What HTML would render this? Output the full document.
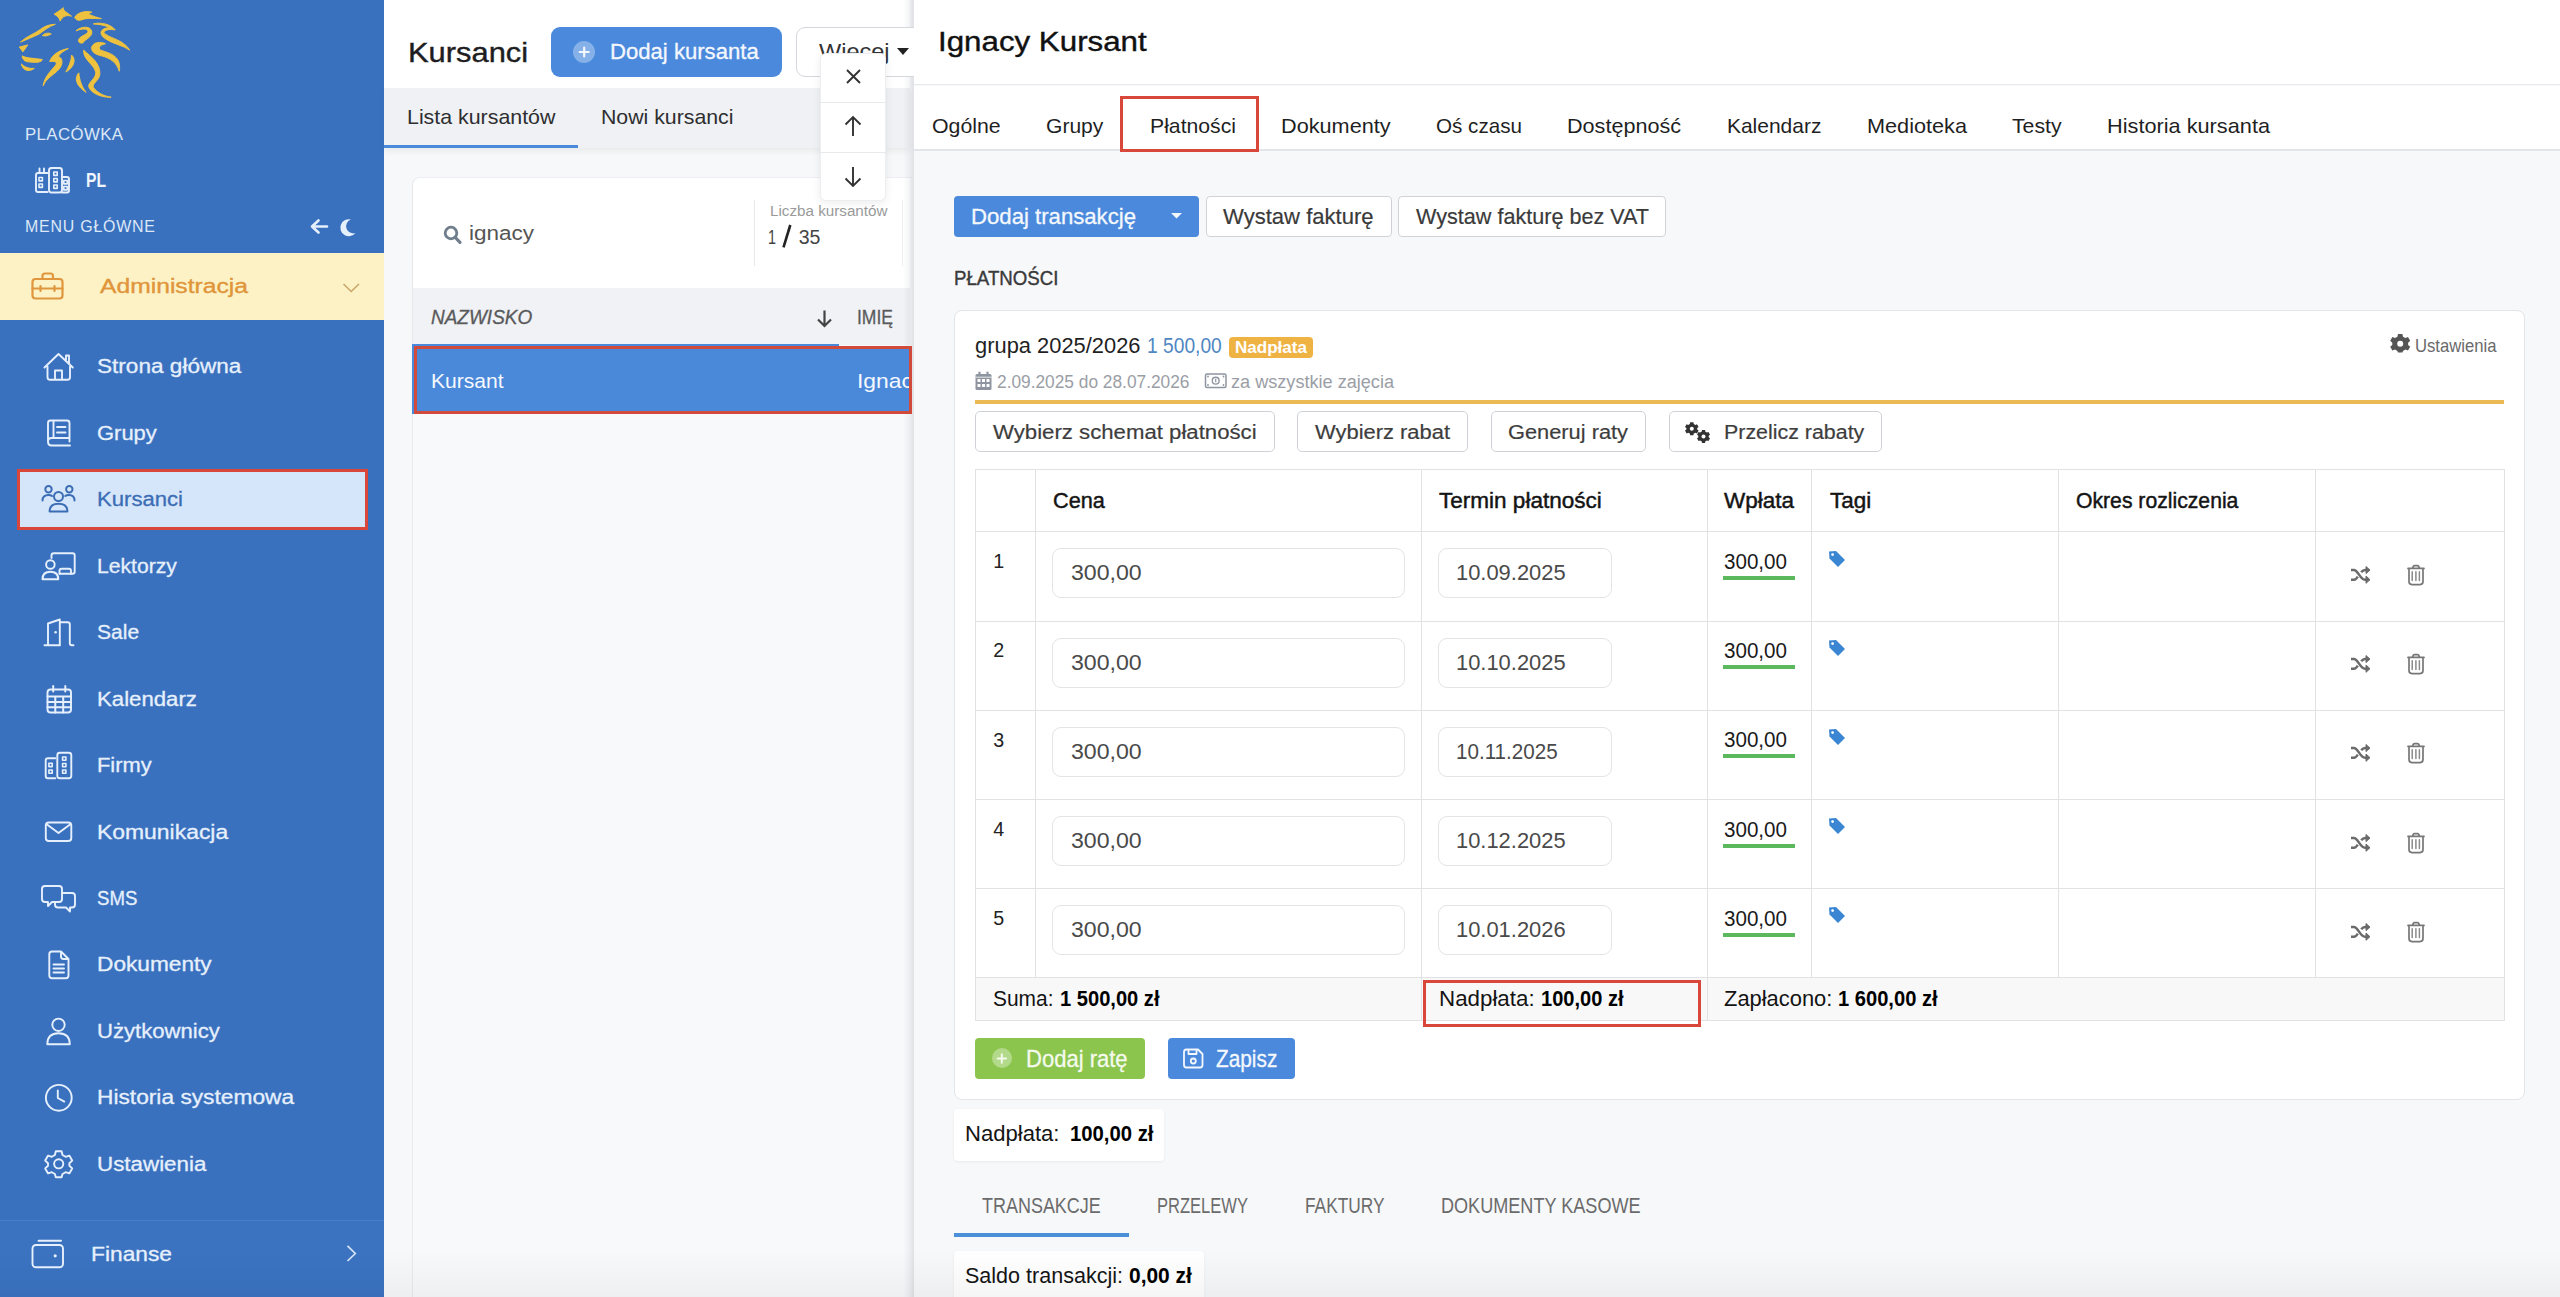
<!DOCTYPE html>
<html><head><meta charset="utf-8"><title>Kursanci</title>
<style>
html,body{margin:0;padding:0;width:2560px;height:1297px;overflow:hidden;background:#f7f8fa;font-family:"Liberation Sans",sans-serif}
.b{position:absolute;box-sizing:border-box}
.tx{position:absolute;white-space:nowrap;line-height:1;font-family:"Liberation Sans",sans-serif;transform-origin:0 0}
svg{position:absolute;overflow:visible}
</style></head><body>
<!-- ============ SIDEBAR ============ -->
<div class="b" style="left:0;top:0;width:384px;height:1297px;background:#3a71bf"></div>
<div class="b" style="left:0;top:253px;width:384px;height:67px;background:#fdf2c6"></div>
<div class="b" style="left:17px;top:469px;width:351px;height:61px;background:#d6e6fa;border:3px solid #d9473a"></div>
<div class="b" style="left:0;top:1220px;width:384px;height:77px;background:#3b73c1;border-top:1px solid #4a80c9"></div>

<!-- ============ MIDDLE PANEL ============ -->
<div class="b" style="left:384px;top:0;width:526px;height:88px;background:#fff"></div>
<div class="b" style="left:384px;top:88px;width:526px;height:60px;background:#eff1f4;box-shadow:0 4px 6px rgba(0,0,0,0.05)"></div>
<div class="b" style="left:384px;top:145px;width:194px;height:3px;background:#4a89dc"></div>
<div class="b" style="left:412px;top:177px;width:500px;height:1130px;background:#f8f9fb;border-left:1px solid #e7e9ec;border-top:1px solid #eceef1;border-radius:8px 0 0 0"></div>
<div class="b" style="left:413px;top:178px;width:497px;height:110px;background:#fff;border-radius:8px 0 0 0"></div>
<div class="b" style="left:754px;top:200px;width:1px;height:66px;background:#e6e8eb"></div>
<div class="b" style="left:902px;top:200px;width:1px;height:66px;background:#eceef0"></div>
<div class="b" style="left:413px;top:288px;width:497px;height:57px;background:#f0f2f5"></div>
<div class="b" style="left:412px;top:344px;width:427px;height:3px;background:#4a89dc"></div>
<div class="b" style="left:903px;top:0;width:11px;height:1297px;background:linear-gradient(to right,rgba(60,70,90,0) 0%,rgba(60,70,90,0.05) 50%,rgba(60,70,90,0.13) 100%)"></div>
<div class="b" style="left:412px;top:346px;width:497px;height:68px;background:#4a88da"></div>
<div class="b" style="left:414px;top:346px;width:497.5px;height:68px;border:3px solid #d24a3c"></div>
<div class="b" style="left:551px;top:27px;width:231px;height:50px;background:#4a89dc;border-radius:9px"></div>
<div class="b" style="left:573px;top:41px;width:22px;height:22px;background:#85b0e8;border-radius:50%"></div>
<div class="b" style="left:796px;top:27px;width:130px;height:50px;background:#fff;border:1px solid #d4d7dc;border-radius:9px"></div>
<svg style="left:897px;top:48px" width="12" height="8"><path d="M0 0 L12 0 L6 7 Z" fill="#222"/></svg>

<!-- ============ RIGHT PANEL ============ -->
<div class="b" style="left:914px;top:0;width:1646px;height:85px;background:#fff;border-bottom:1px solid #e8eaed"></div>
<div class="b" style="left:914px;top:86px;width:1646px;height:65px;background:#fff;border-bottom:2px solid #e3e5e9"></div>
<div class="b" style="left:1120px;top:96px;width:139px;height:56px;border:3px solid #d9473a"></div>
<div class="b" style="left:954px;top:196px;width:245px;height:41px;background:#4a89dc;border-radius:4px"></div>
<svg style="left:1171px;top:213px" width="11" height="6"><path d="M0 0 L11 0 L5.5 5.5 Z" fill="#f4f8fd"/></svg>
<div class="b" style="left:1206px;top:196px;width:186px;height:41px;background:#fff;border:1px solid #cfd3d8;border-radius:4px"></div>
<div class="b" style="left:1398px;top:196px;width:268px;height:41px;background:#fff;border:1px solid #cfd3d8;border-radius:4px"></div>

<!-- card -->
<div class="b" style="left:954px;top:310px;width:1571px;height:790px;background:#fff;border:1px solid #e2e5e9;border-radius:8px"></div>
<div class="b" style="left:1229px;top:337px;width:84px;height:21px;background:#efb343;border-radius:4px"></div>
<div class="b" style="left:975px;top:400px;width:1529px;height:4px;background:#ebba55"></div>
<div class="b" style="left:975px;top:411px;width:300px;height:41px;background:#fff;border:1px solid #cfd3d8;border-radius:5px"></div>
<div class="b" style="left:1297px;top:411px;width:171px;height:41px;background:#fff;border:1px solid #cfd3d8;border-radius:5px"></div>
<div class="b" style="left:1491px;top:411px;width:155px;height:41px;background:#fff;border:1px solid #cfd3d8;border-radius:5px"></div>
<div class="b" style="left:1669px;top:411px;width:213px;height:41px;background:#fff;border:1px solid #cfd3d8;border-radius:5px"></div>

<!-- table -->
<div class="b" style="left:975px;top:469px;width:1530px;height:552px;border:1px solid #e2e2e4"></div>
<div class="b" style="left:976px;top:978px;width:1528px;height:42px;background:#f8f8f9"></div>
<div class="b" style="left:975px;top:531px;width:1530px;height:1px;background:#e2e2e4"></div>
<div class="b" style="left:975px;top:621px;width:1530px;height:1px;background:#e2e2e4"></div>
<div class="b" style="left:975px;top:710px;width:1530px;height:1px;background:#e2e2e4"></div>
<div class="b" style="left:975px;top:799px;width:1530px;height:1px;background:#e2e2e4"></div>
<div class="b" style="left:975px;top:888px;width:1530px;height:1px;background:#e2e2e4"></div>
<div class="b" style="left:975px;top:977px;width:1530px;height:1px;background:#e2e2e4"></div>
<div class="b" style="left:1035px;top:469px;width:1px;height:509px;background:#e2e2e4"></div>
<div class="b" style="left:1421px;top:469px;width:1px;height:552px;background:#e2e2e4"></div>
<div class="b" style="left:1707px;top:469px;width:1px;height:552px;background:#e2e2e4"></div>
<div class="b" style="left:1811px;top:469px;width:1px;height:509px;background:#e2e2e4"></div>
<div class="b" style="left:2058px;top:469px;width:1px;height:509px;background:#e2e2e4"></div>
<div class="b" style="left:2315px;top:469px;width:1px;height:509px;background:#e2e2e4"></div>
<div class="b" style="left:1052px;top:548.3px;width:353px;height:50px;background:#fff;border:1px solid #e3e4e6;border-radius:9px"></div>
<div class="b" style="left:1438px;top:548.3px;width:174px;height:50px;background:#fff;border:1px solid #e3e4e6;border-radius:9px"></div>
<div class="b" style="left:1723px;top:576.0px;width:72px;height:4px;background:#5cb85c"></div>
<svg style="left:1828px;top:549.5px" width="18" height="17" viewBox="0 0 18 17"><path d="M1 1.5 L8 1 L17 10 L10 17 L1.5 8.5 Z" fill="#3a86d2"/><circle cx="4.6" cy="4.6" r="1.4" fill="#fff"/></svg>
<svg style="left:2340px;top:556.0px" width="40" height="40" viewBox="0 0 40 40"><path d="M11 13.9 H14 C18 13.9 20 23.7 25 23.7 H27 M11 23.7 H14 C15.5 23.7 16.8 22.2 17.8 20.6 M21.2 16.3 C22.3 14.9 23.5 13.9 25 13.9 H27" fill="none" stroke="#6b6b6b" stroke-width="2.5"/><path d="M26 10.5 L30 14.1 L26 17.6 Z M26 20 L30 23.7 L26 27.3 Z" fill="#6b6b6b" stroke="#6b6b6b" stroke-width="1" stroke-linejoin="round"/></svg>
<svg style="left:2400px;top:556.0px" width="32" height="40" viewBox="0 0 32 40"><path d="M8 12.4 H24 M12.6 12.4 Q13 9.6 14.5 9.6 H17.5 Q19 9.6 19.4 12.4 M9 12.4 V25.6 Q9 28.6 12 28.6 H20 Q23 28.6 23 25.6 V12.4" fill="none" stroke="#777" stroke-width="1.7" stroke-linecap="round"/><path d="M12.2 15.8 V24.5 M15.9 15.8 V24.5 M19.4 15.8 V24.5" stroke="#8a8a8a" stroke-width="1.5" stroke-linecap="round"/></svg>
<div class="b" style="left:1052px;top:637.5px;width:353px;height:50px;background:#fff;border:1px solid #e3e4e6;border-radius:9px"></div>
<div class="b" style="left:1438px;top:637.5px;width:174px;height:50px;background:#fff;border:1px solid #e3e4e6;border-radius:9px"></div>
<div class="b" style="left:1723px;top:665.2px;width:72px;height:4px;background:#5cb85c"></div>
<svg style="left:1828px;top:638.7px" width="18" height="17" viewBox="0 0 18 17"><path d="M1 1.5 L8 1 L17 10 L10 17 L1.5 8.5 Z" fill="#3a86d2"/><circle cx="4.6" cy="4.6" r="1.4" fill="#fff"/></svg>
<svg style="left:2340px;top:645.2px" width="40" height="40" viewBox="0 0 40 40"><path d="M11 13.9 H14 C18 13.9 20 23.7 25 23.7 H27 M11 23.7 H14 C15.5 23.7 16.8 22.2 17.8 20.6 M21.2 16.3 C22.3 14.9 23.5 13.9 25 13.9 H27" fill="none" stroke="#6b6b6b" stroke-width="2.5"/><path d="M26 10.5 L30 14.1 L26 17.6 Z M26 20 L30 23.7 L26 27.3 Z" fill="#6b6b6b" stroke="#6b6b6b" stroke-width="1" stroke-linejoin="round"/></svg>
<svg style="left:2400px;top:645.2px" width="32" height="40" viewBox="0 0 32 40"><path d="M8 12.4 H24 M12.6 12.4 Q13 9.6 14.5 9.6 H17.5 Q19 9.6 19.4 12.4 M9 12.4 V25.6 Q9 28.6 12 28.6 H20 Q23 28.6 23 25.6 V12.4" fill="none" stroke="#777" stroke-width="1.7" stroke-linecap="round"/><path d="M12.2 15.8 V24.5 M15.9 15.8 V24.5 M19.4 15.8 V24.5" stroke="#8a8a8a" stroke-width="1.5" stroke-linecap="round"/></svg>
<div class="b" style="left:1052px;top:726.7px;width:353px;height:50px;background:#fff;border:1px solid #e3e4e6;border-radius:9px"></div>
<div class="b" style="left:1438px;top:726.7px;width:174px;height:50px;background:#fff;border:1px solid #e3e4e6;border-radius:9px"></div>
<div class="b" style="left:1723px;top:754.4px;width:72px;height:4px;background:#5cb85c"></div>
<svg style="left:1828px;top:727.9px" width="18" height="17" viewBox="0 0 18 17"><path d="M1 1.5 L8 1 L17 10 L10 17 L1.5 8.5 Z" fill="#3a86d2"/><circle cx="4.6" cy="4.6" r="1.4" fill="#fff"/></svg>
<svg style="left:2340px;top:734.4px" width="40" height="40" viewBox="0 0 40 40"><path d="M11 13.9 H14 C18 13.9 20 23.7 25 23.7 H27 M11 23.7 H14 C15.5 23.7 16.8 22.2 17.8 20.6 M21.2 16.3 C22.3 14.9 23.5 13.9 25 13.9 H27" fill="none" stroke="#6b6b6b" stroke-width="2.5"/><path d="M26 10.5 L30 14.1 L26 17.6 Z M26 20 L30 23.7 L26 27.3 Z" fill="#6b6b6b" stroke="#6b6b6b" stroke-width="1" stroke-linejoin="round"/></svg>
<svg style="left:2400px;top:734.4px" width="32" height="40" viewBox="0 0 32 40"><path d="M8 12.4 H24 M12.6 12.4 Q13 9.6 14.5 9.6 H17.5 Q19 9.6 19.4 12.4 M9 12.4 V25.6 Q9 28.6 12 28.6 H20 Q23 28.6 23 25.6 V12.4" fill="none" stroke="#777" stroke-width="1.7" stroke-linecap="round"/><path d="M12.2 15.8 V24.5 M15.9 15.8 V24.5 M19.4 15.8 V24.5" stroke="#8a8a8a" stroke-width="1.5" stroke-linecap="round"/></svg>
<div class="b" style="left:1052px;top:815.9px;width:353px;height:50px;background:#fff;border:1px solid #e3e4e6;border-radius:9px"></div>
<div class="b" style="left:1438px;top:815.9px;width:174px;height:50px;background:#fff;border:1px solid #e3e4e6;border-radius:9px"></div>
<div class="b" style="left:1723px;top:843.6px;width:72px;height:4px;background:#5cb85c"></div>
<svg style="left:1828px;top:817.1px" width="18" height="17" viewBox="0 0 18 17"><path d="M1 1.5 L8 1 L17 10 L10 17 L1.5 8.5 Z" fill="#3a86d2"/><circle cx="4.6" cy="4.6" r="1.4" fill="#fff"/></svg>
<svg style="left:2340px;top:823.6px" width="40" height="40" viewBox="0 0 40 40"><path d="M11 13.9 H14 C18 13.9 20 23.7 25 23.7 H27 M11 23.7 H14 C15.5 23.7 16.8 22.2 17.8 20.6 M21.2 16.3 C22.3 14.9 23.5 13.9 25 13.9 H27" fill="none" stroke="#6b6b6b" stroke-width="2.5"/><path d="M26 10.5 L30 14.1 L26 17.6 Z M26 20 L30 23.7 L26 27.3 Z" fill="#6b6b6b" stroke="#6b6b6b" stroke-width="1" stroke-linejoin="round"/></svg>
<svg style="left:2400px;top:823.6px" width="32" height="40" viewBox="0 0 32 40"><path d="M8 12.4 H24 M12.6 12.4 Q13 9.6 14.5 9.6 H17.5 Q19 9.6 19.4 12.4 M9 12.4 V25.6 Q9 28.6 12 28.6 H20 Q23 28.6 23 25.6 V12.4" fill="none" stroke="#777" stroke-width="1.7" stroke-linecap="round"/><path d="M12.2 15.8 V24.5 M15.9 15.8 V24.5 M19.4 15.8 V24.5" stroke="#8a8a8a" stroke-width="1.5" stroke-linecap="round"/></svg>
<div class="b" style="left:1052px;top:905.1px;width:353px;height:50px;background:#fff;border:1px solid #e3e4e6;border-radius:9px"></div>
<div class="b" style="left:1438px;top:905.1px;width:174px;height:50px;background:#fff;border:1px solid #e3e4e6;border-radius:9px"></div>
<div class="b" style="left:1723px;top:932.8px;width:72px;height:4px;background:#5cb85c"></div>
<svg style="left:1828px;top:906.3px" width="18" height="17" viewBox="0 0 18 17"><path d="M1 1.5 L8 1 L17 10 L10 17 L1.5 8.5 Z" fill="#3a86d2"/><circle cx="4.6" cy="4.6" r="1.4" fill="#fff"/></svg>
<svg style="left:2340px;top:912.8px" width="40" height="40" viewBox="0 0 40 40"><path d="M11 13.9 H14 C18 13.9 20 23.7 25 23.7 H27 M11 23.7 H14 C15.5 23.7 16.8 22.2 17.8 20.6 M21.2 16.3 C22.3 14.9 23.5 13.9 25 13.9 H27" fill="none" stroke="#6b6b6b" stroke-width="2.5"/><path d="M26 10.5 L30 14.1 L26 17.6 Z M26 20 L30 23.7 L26 27.3 Z" fill="#6b6b6b" stroke="#6b6b6b" stroke-width="1" stroke-linejoin="round"/></svg>
<svg style="left:2400px;top:912.8px" width="32" height="40" viewBox="0 0 32 40"><path d="M8 12.4 H24 M12.6 12.4 Q13 9.6 14.5 9.6 H17.5 Q19 9.6 19.4 12.4 M9 12.4 V25.6 Q9 28.6 12 28.6 H20 Q23 28.6 23 25.6 V12.4" fill="none" stroke="#777" stroke-width="1.7" stroke-linecap="round"/><path d="M12.2 15.8 V24.5 M15.9 15.8 V24.5 M19.4 15.8 V24.5" stroke="#8a8a8a" stroke-width="1.5" stroke-linecap="round"/></svg>
<div class="b" style="left:1423px;top:980px;width:278px;height:47px;border:3px solid #d9473a"></div>

<div class="b" style="left:975px;top:1038px;width:170px;height:41px;background:#8cc54d;border-radius:4px"></div>
<div class="b" style="left:992px;top:1048px;width:20px;height:20px;background:#b3d98a;border-radius:50%"></div>
<div class="b" style="left:1168px;top:1038px;width:127px;height:41px;background:#4a89dc;border-radius:4px"></div>

<div class="b" style="left:954px;top:1109px;width:210px;height:52px;background:#fff;border-radius:4px;box-shadow:0 1px 3px rgba(0,0,0,0.06)"></div>
<div class="b" style="left:954px;top:1233px;width:175px;height:4px;background:#4a8fd8"></div>
<div class="b" style="left:954px;top:1251px;width:250px;height:60px;background:#fff;border-radius:4px;box-shadow:0 1px 3px rgba(0,0,0,0.06)"></div>

<!-- bottom fade -->
<div class="b" style="left:0;top:1250px;width:2560px;height:47px;background:linear-gradient(to bottom,rgba(0,0,0,0),rgba(0,0,0,0.04))"></div>

<span class="tx" style="left:25.0px;top:127.3px;font-size:16.81px;color:#dce8f7;letter-spacing:0.397px">PLACÓWKA</span>
<span class="tx" style="left:86.0px;top:170.0px;font-size:20.29px;color:#eef5fd;font-weight:bold;transform:scaleX(0.7715)">PL</span>
<span class="tx" style="left:25.0px;top:219.1px;font-size:15.94px;color:#dce8f7;letter-spacing:0.780px">MENU GŁÓWNE</span>
<span class="tx" style="left:100.0px;top:277.0px;font-size:19.57px;color:#e0953a;-webkit-text-stroke:0.35px #e0953a;transform:scaleX(1.2604)">Administracja</span>
<span class="tx" style="left:96.6px;top:356.3px;font-size:20.72px;color:#e6f0fc;-webkit-text-stroke:0.3px #e6f0fc;transform:scaleX(1.0901)">Strona główna</span>
<span class="tx" style="left:96.6px;top:422.8px;font-size:20.72px;color:#e6f0fc;-webkit-text-stroke:0.3px #e6f0fc;transform:scaleX(1.0599)">Grupy</span>
<span class="tx" style="left:96.6px;top:489.2px;font-size:20.72px;color:#3b6db5;-webkit-text-stroke:0.3px #3b6db5;transform:scaleX(1.0669)">Kursanci</span>
<span class="tx" style="left:96.6px;top:555.7px;font-size:20.72px;color:#e6f0fc;-webkit-text-stroke:0.3px #e6f0fc;transform:scaleX(1.0190)">Lektorzy</span>
<span class="tx" style="left:96.6px;top:622.1px;font-size:20.72px;color:#e6f0fc;-webkit-text-stroke:0.3px #e6f0fc;transform:scaleX(1.0176)">Sale</span>
<span class="tx" style="left:96.6px;top:688.6px;font-size:20.72px;color:#e6f0fc;-webkit-text-stroke:0.3px #e6f0fc;transform:scaleX(1.0708)">Kalendarz</span>
<span class="tx" style="left:96.6px;top:755.0px;font-size:20.72px;color:#e6f0fc;-webkit-text-stroke:0.3px #e6f0fc;transform:scaleX(1.0564)">Firmy</span>
<span class="tx" style="left:96.6px;top:821.5px;font-size:20.72px;color:#e6f0fc;-webkit-text-stroke:0.3px #e6f0fc;transform:scaleX(1.1060)">Komunikacja</span>
<span class="tx" style="left:96.6px;top:887.9px;font-size:20.72px;color:#e6f0fc;-webkit-text-stroke:0.3px #e6f0fc;transform:scaleX(0.8997)">SMS</span>
<span class="tx" style="left:96.6px;top:954.4px;font-size:20.72px;color:#e6f0fc;-webkit-text-stroke:0.3px #e6f0fc;transform:scaleX(1.0945)">Dokumenty</span>
<span class="tx" style="left:96.6px;top:1020.8px;font-size:20.72px;color:#e6f0fc;-webkit-text-stroke:0.3px #e6f0fc;transform:scaleX(1.0665)">Użytkownicy</span>
<span class="tx" style="left:96.6px;top:1087.3px;font-size:20.72px;color:#e6f0fc;-webkit-text-stroke:0.3px #e6f0fc;transform:scaleX(1.0973)">Historia systemowa</span>
<span class="tx" style="left:96.6px;top:1153.7px;font-size:20.72px;color:#e6f0fc;-webkit-text-stroke:0.3px #e6f0fc;transform:scaleX(1.0795)">Ustawienia</span>
<span class="tx" style="left:91.0px;top:1242.5px;font-size:21.01px;color:#e6f0fc;-webkit-text-stroke:0.3px #e6f0fc;transform:scaleX(1.0841)">Finanse</span>
<span class="tx" style="left:407.5px;top:37.7px;font-size:28.55px;color:#1d1d1f;-webkit-text-stroke:0.4px #1d1d1f;transform:scaleX(1.0812)">Kursanci</span>
<span class="tx" style="left:610.0px;top:41.0px;font-size:21.74px;color:#f4f8fd;-webkit-text-stroke:0.3px #f4f8fd;transform:scaleX(1.0172)">Dodaj kursanta</span>
<div style="position:absolute;left:0;top:0;width:909px;height:1297px;overflow:hidden"><span class="tx" style="left:819.4px;top:41.0px;font-size:21.74px;color:#333;transform:scaleX(1.0825)">Więcej</span></div>
<span class="tx" style="left:407.0px;top:106.0px;font-size:21.01px;color:#2e2e30;transform:scaleX(1.0171)">Lista kursantów</span>
<span class="tx" style="left:601.0px;top:106.0px;font-size:21.01px;color:#2e2e30;transform:scaleX(1.0136)">Nowi kursanci</span>
<span class="tx" style="left:469.0px;top:223.0px;font-size:20.75px;color:#555;transform:scaleX(1.0836)">ignacy</span>
<span class="tx" style="left:769.5px;top:203.8px;font-size:14.49px;color:#9a9a9a;transform:scaleX(1.0498)">Liczba kursantów</span>
<span class="tx" style="left:768.0px;top:228.3px;font-size:19.57px;color:#444;transform:scaleX(0.7346)">1</span>
<span class="tx" style="left:798.7px;top:228.3px;font-size:19.57px;color:#444">35</span>
<span class="tx" style="left:430.8px;top:307.5px;font-size:19.57px;color:#5a5a5c;font-style:italic;-webkit-text-stroke:0.3px #5a5a5c;transform:scaleX(0.9699)">NAZWISKO</span>
<span class="tx" style="left:857.0px;top:307.5px;font-size:19.57px;color:#5a5a5c;-webkit-text-stroke:0.3px #5a5a5c;transform:scaleX(0.8951)">IMIĘ</span>
<span class="tx" style="left:430.8px;top:370.5px;font-size:20.43px;color:#f5f9fe;transform:scaleX(1.0328)">Kursant</span>
<div style="position:absolute;left:0;top:0;width:908.5px;height:1297px;overflow:hidden"><span class="tx" style="left:857.0px;top:370.5px;font-size:20.43px;color:#f5f9fe;transform:scaleX(1.1200)">Ignacy</span></div>
<span class="tx" style="left:938.3px;top:26.8px;font-size:28.33px;color:#111;-webkit-text-stroke:0.4px #111;transform:scaleX(1.1044)">Ignacy Kursant</span>
<span class="tx" style="left:931.9px;top:114.8px;font-size:21.01px;color:#1f1f1f;transform:scaleX(1.0145)">Ogólne</span>
<span class="tx" style="left:1046.4px;top:114.8px;font-size:21.01px;color:#1f1f1f;transform:scaleX(1.0028)">Grupy</span>
<span class="tx" style="left:1149.5px;top:114.8px;font-size:21.01px;color:#1f1f1f;transform:scaleX(1.0092)">Płatności</span>
<span class="tx" style="left:1281.0px;top:114.8px;font-size:21.01px;color:#1f1f1f;transform:scaleX(1.0318)">Dokumenty</span>
<span class="tx" style="left:1436.0px;top:114.8px;font-size:21.01px;color:#1f1f1f;transform:scaleX(0.9825)">Oś czasu</span>
<span class="tx" style="left:1567.0px;top:114.8px;font-size:21.01px;color:#1f1f1f;transform:scaleX(1.0279)">Dostępność</span>
<span class="tx" style="left:1726.9px;top:114.8px;font-size:21.01px;color:#1f1f1f">Kalendarz</span>
<span class="tx" style="left:1867.0px;top:114.8px;font-size:21.01px;color:#1f1f1f;transform:scaleX(1.0321)">Medioteka</span>
<span class="tx" style="left:2012.4px;top:114.8px;font-size:21.01px;color:#1f1f1f;transform:scaleX(1.0119)">Testy</span>
<span class="tx" style="left:2107.0px;top:114.8px;font-size:21.01px;color:#1f1f1f;transform:scaleX(1.0345)">Historia kursanta</span>
<span class="tx" style="left:971.0px;top:205.4px;font-size:22.68px;color:#f4f8fd;-webkit-text-stroke:0.3px #f4f8fd;transform:scaleX(0.9771)">Dodaj transakcję</span>
<span class="tx" style="left:1223.4px;top:205.4px;font-size:22.68px;color:#3a3a3a;-webkit-text-stroke:0.2px #3a3a3a;transform:scaleX(0.9731)">Wystaw fakturę</span>
<span class="tx" style="left:1416.0px;top:205.4px;font-size:22.68px;color:#3a3a3a;-webkit-text-stroke:0.2px #3a3a3a;transform:scaleX(0.9524)">Wystaw fakturę bez VAT</span>
<span class="tx" style="left:954.0px;top:268.3px;font-size:20.72px;color:#3a3a3a;-webkit-text-stroke:0.4px #3a3a3a;transform:scaleX(0.9007)">PŁATNOŚCI</span>
<span class="tx" style="left:975.0px;top:335.3px;font-size:21.16px;color:#1f1f1f;transform:scaleX(1.0344)">grupa 2025/2026</span>
<span class="tx" style="left:1147.0px;top:335.3px;font-size:21.16px;color:#4f87c2;transform:scaleX(0.9082)">1 500,00</span>
<span class="tx" style="left:1235.0px;top:340.3px;font-size:16.81px;color:#fff;font-weight:bold;transform:scaleX(1.0150)">Nadpłata</span>
<span class="tx" style="left:2415.3px;top:336.0px;font-size:19.28px;color:#6a6a6a;transform:scaleX(0.8649)">Ustawienia</span>
<span class="tx" style="left:997.3px;top:372.4px;font-size:18.99px;color:#9a9ea6;transform:scaleX(0.9117)">2.09.2025 do 28.07.2026</span>
<span class="tx" style="left:1231.0px;top:373.4px;font-size:18.68px;color:#9a9ea6;transform:scaleX(0.9696)">za wszystkie zajęcia</span>
<span class="tx" style="left:993.3px;top:421.6px;font-size:20.72px;color:#3d3d3d;-webkit-text-stroke:0.2px #3d3d3d;transform:scaleX(1.0705)">Wybierz schemat płatności</span>
<span class="tx" style="left:1315.4px;top:421.6px;font-size:20.72px;color:#3d3d3d;-webkit-text-stroke:0.2px #3d3d3d;transform:scaleX(1.0578)">Wybierz rabat</span>
<span class="tx" style="left:1508.0px;top:421.6px;font-size:20.72px;color:#3d3d3d;-webkit-text-stroke:0.2px #3d3d3d;transform:scaleX(1.0525)">Generuj raty</span>
<span class="tx" style="left:1724.3px;top:421.6px;font-size:20.72px;color:#3d3d3d;-webkit-text-stroke:0.2px #3d3d3d;transform:scaleX(1.0326)">Przelicz rabaty</span>
<span class="tx" style="left:1052.7px;top:489.8px;font-size:22.03px;color:#141414;-webkit-text-stroke:0.45px #141414;transform:scaleX(0.9840)">Cena</span>
<span class="tx" style="left:1439.0px;top:489.8px;font-size:22.03px;color:#141414;-webkit-text-stroke:0.45px #141414;transform:scaleX(1.0234)">Termin płatności</span>
<span class="tx" style="left:1724.3px;top:489.8px;font-size:22.03px;color:#141414;-webkit-text-stroke:0.45px #141414;transform:scaleX(1.0214)">Wpłata</span>
<span class="tx" style="left:1829.8px;top:489.8px;font-size:22.03px;color:#141414;-webkit-text-stroke:0.45px #141414;transform:scaleX(1.0200)">Tagi</span>
<span class="tx" style="left:2076.0px;top:489.8px;font-size:22.03px;color:#141414;-webkit-text-stroke:0.45px #141414;transform:scaleX(0.9618)">Okres rozliczenia</span>
<span class="tx" style="left:993.3px;top:552.1px;font-size:19.71px;color:#222">1</span>
<span class="tx" style="left:1071.0px;top:561.3px;font-size:22.90px;color:#4a4a4a;transform:scaleX(1.0098)">300,00</span>
<span class="tx" style="left:1456.4px;top:561.3px;font-size:22.90px;color:#4a4a4a;transform:scaleX(0.9566)">10.09.2025</span>
<span class="tx" style="left:1724.3px;top:551.0px;font-size:21.88px;color:#1a1a1a;transform:scaleX(0.9414)">300,00</span>
<span class="tx" style="left:993.3px;top:641.3px;font-size:19.71px;color:#222">2</span>
<span class="tx" style="left:1071.0px;top:650.5px;font-size:22.90px;color:#4a4a4a;transform:scaleX(1.0098)">300,00</span>
<span class="tx" style="left:1456.4px;top:650.5px;font-size:22.90px;color:#4a4a4a;transform:scaleX(0.9566)">10.10.2025</span>
<span class="tx" style="left:1724.3px;top:640.2px;font-size:21.88px;color:#1a1a1a;transform:scaleX(0.9414)">300,00</span>
<span class="tx" style="left:993.3px;top:730.5px;font-size:19.71px;color:#222">3</span>
<span class="tx" style="left:1071.0px;top:739.7px;font-size:22.90px;color:#4a4a4a;transform:scaleX(1.0098)">300,00</span>
<span class="tx" style="left:1456.4px;top:739.7px;font-size:22.90px;color:#4a4a4a;transform:scaleX(0.9001)">10.11.2025</span>
<span class="tx" style="left:1724.3px;top:729.4px;font-size:21.88px;color:#1a1a1a;transform:scaleX(0.9414)">300,00</span>
<span class="tx" style="left:993.3px;top:819.6px;font-size:19.71px;color:#222">4</span>
<span class="tx" style="left:1071.0px;top:828.9px;font-size:22.90px;color:#4a4a4a;transform:scaleX(1.0098)">300,00</span>
<span class="tx" style="left:1456.4px;top:828.9px;font-size:22.90px;color:#4a4a4a;transform:scaleX(0.9566)">10.12.2025</span>
<span class="tx" style="left:1724.3px;top:818.6px;font-size:21.88px;color:#1a1a1a;transform:scaleX(0.9414)">300,00</span>
<span class="tx" style="left:993.3px;top:908.8px;font-size:19.71px;color:#222">5</span>
<span class="tx" style="left:1071.0px;top:918.1px;font-size:22.90px;color:#4a4a4a;transform:scaleX(1.0098)">300,00</span>
<span class="tx" style="left:1456.4px;top:918.1px;font-size:22.90px;color:#4a4a4a;transform:scaleX(0.9566)">10.01.2026</span>
<span class="tx" style="left:1724.3px;top:907.8px;font-size:21.88px;color:#1a1a1a;transform:scaleX(0.9414)">300,00</span>
<span class="tx" style="left:993.0px;top:988.7px;font-size:21.30px;color:#141414;transform:scaleX(0.9827)">Suma:</span>
<span class="tx" style="left:1059.5px;top:988.7px;font-size:21.30px;color:#000;font-weight:bold;transform:scaleX(0.9441)">1 500,00 zł</span>
<span class="tx" style="left:1438.8px;top:988.7px;font-size:21.30px;color:#141414;transform:scaleX(1.0486)">Nadpłata:</span>
<span class="tx" style="left:1540.8px;top:988.7px;font-size:21.30px;color:#000;font-weight:bold;transform:scaleX(0.9415)">100,00 zł</span>
<span class="tx" style="left:1724.0px;top:988.7px;font-size:21.30px;color:#141414;transform:scaleX(1.0287)">Zapłacono:</span>
<span class="tx" style="left:1838.4px;top:988.7px;font-size:21.30px;color:#000;font-weight:bold;transform:scaleX(0.9451)">1 600,00 zł</span>
<span class="tx" style="left:1025.7px;top:1046.7px;font-size:24.78px;color:#f5faee;-webkit-text-stroke:0.3px #f5faee;transform:scaleX(0.8892)">Dodaj ratę</span>
<span class="tx" style="left:1215.7px;top:1046.7px;font-size:24.78px;color:#f4f8fd;-webkit-text-stroke:0.3px #f4f8fd;transform:scaleX(0.8403)">Zapisz</span>
<span class="tx" style="left:965.0px;top:1124.2px;font-size:21.30px;color:#141414;transform:scaleX(1.0365)">Nadpłata:</span>
<span class="tx" style="left:1069.5px;top:1124.2px;font-size:21.30px;color:#000;font-weight:bold;transform:scaleX(0.9529)">100,00 zł</span>
<span class="tx" style="left:981.8px;top:1195.0px;font-size:21.74px;color:#6b6b6b;transform:scaleX(0.8266)">TRANSAKCJE</span>
<span class="tx" style="left:1157.0px;top:1195.0px;font-size:21.74px;color:#6b6b6b;transform:scaleX(0.7611)">PRZELEWY</span>
<span class="tx" style="left:1304.5px;top:1195.0px;font-size:21.74px;color:#6b6b6b;transform:scaleX(0.7962)">FAKTURY</span>
<span class="tx" style="left:1440.8px;top:1195.0px;font-size:21.74px;color:#6b6b6b;transform:scaleX(0.8319)">DOKUMENTY KASOWE</span>
<span class="tx" style="left:965.0px;top:1265.4px;font-size:22.32px;color:#141414;transform:scaleX(0.9651)">Saldo transakcji:</span>
<span class="tx" style="left:1129.0px;top:1265.4px;font-size:22.32px;color:#000;font-weight:bold;transform:scaleX(0.9375)">0,00 zł</span>
<!-- ===== logo ===== -->
<svg style="left:10px;top:0" width="130" height="105" viewBox="0 0 1606 1297">
<g fill="#eec23e" stroke="#eec23e" stroke-width="12" stroke-linejoin="round">
<path d="M545 175 C600 140 640 110 660 95 C650 130 700 150 760 200 C700 180 650 200 620 260 C610 220 580 190 545 175 Z"/>
<path d="M800 215 C830 150 950 130 1010 150 C960 165 950 180 1130 230 C1020 230 960 220 900 240 C860 260 810 250 800 215 Z"/>
<path d="M130 520 C200 450 300 420 380 360 C420 330 480 300 560 300 C470 330 420 380 360 420 C280 460 200 490 130 520 Z"/>
<path d="M400 440 C420 410 480 400 510 420 C470 440 440 450 400 440 Z"/>
<path d="M115 580 L220 555 L160 640 Z"/>
<path d="M150 690 C200 720 300 720 400 735 C390 770 330 780 200 760 C170 750 150 720 150 690 Z"/>
<path d="M140 790 C180 830 230 850 300 845 C240 890 160 880 140 790 Z"/>
<path d="M815 380 C880 320 1000 320 1010 390 C1020 460 930 480 900 530 C870 540 820 520 860 470 C900 430 980 420 960 370 C930 350 870 360 815 380 Z"/>
<path d="M1030 295 C1120 270 1250 300 1300 370 C1240 360 1180 360 1160 400 C1200 470 1400 480 1480 620 C1400 560 1260 540 1180 480 C1100 430 1100 350 1230 340 C1170 310 1100 300 1030 295 Z"/>
<path d="M1010 580 C1030 520 1120 510 1180 540 C1100 560 1090 590 1120 620 C1250 660 1380 700 1350 880 C1320 780 1250 720 1130 690 C1050 670 1000 640 1010 580 Z"/>
<path d="M490 760 C520 680 600 620 720 600 C640 640 600 680 600 700 C660 720 650 800 610 850 C540 930 450 960 410 1060 C420 960 500 880 560 810 C590 770 560 750 490 760 Z"/>
<path d="M760 680 C810 720 810 820 690 890 C720 830 760 760 760 680 Z"/>
<path d="M910 620 C1000 700 1120 780 1110 920 C1100 1000 1010 1030 1030 1080 C1080 1150 1170 1190 1250 1200 C1150 1210 1020 1160 980 1090 C940 1030 1060 980 1060 900 C1050 800 900 740 910 620 Z"/>
<path d="M850 900 C800 950 800 1050 940 1140 C880 1060 860 990 850 900 Z"/>
</g>
</svg>

<!-- ===== sidebar icons ===== -->

<!-- building PL -->
<svg style="left:0;top:0" width="384" height="1297" viewBox="0 0 384 1297">
<g fill="none" stroke="#e6f0fc" stroke-width="1.9" stroke-linecap="round" stroke-linejoin="round">
 <!-- PL building -->
 <path d="M47.5 192 H38 Q36 192 36 190 V175 Q36 173 38 173 H47.5"/>
 <path d="M39.5 173 V168.5 M44 173 V168.5"/>
 <rect x="49" y="168" width="13" height="24.5" rx="2.5"/>
 <path d="M62 177 H67 Q69 177 69 179 V190.5 Q69 192.5 67 192.5 H62"/>
 <rect x="39" y="177.5" width="3.4" height="3.4" stroke-width="1.6"/>
 <rect x="39" y="184" width="3.4" height="3.4" stroke-width="1.6"/>
 <rect x="53.8" y="172" width="3.4" height="3.4" stroke-width="1.6"/>
 <rect x="53.8" y="178.5" width="3.4" height="3.4" stroke-width="1.6"/>
 <rect x="53.8" y="185" width="3.4" height="3.4" stroke-width="1.6"/>
 <rect x="63.8" y="180.5" width="3.4" height="3.4" stroke-width="1.6"/>
 <rect x="63.8" y="186.5" width="3.4" height="3.4" stroke-width="1.6"/>
 <!-- arrow left, moon -->
 <path d="M312 226.5 H327 M318.5 220.5 L312 226.5 L318.5 232.5" stroke-width="2.6"/>
</g>
<path d="M351 219.5 A8.5 8.5 0 1 0 355.5 233 A7 7 0 0 1 351 219.5 Z" fill="#e6f0fc"/>
<!-- briefcase -->
<g fill="none" stroke="#e0963c" stroke-width="2.2" stroke-linecap="round" stroke-linejoin="round">
 <path d="M42.5 279 V276 Q42.5 273.5 45 273.5 H50.5 Q53 273.5 53 276 V279"/>
 <rect x="32.5" y="279" width="30" height="19.5" rx="3"/>
 <path d="M32.5 288.5 H62.5 M40.5 286 V291 M54.5 286 V291"/>
</g>
<path d="M343.5 284 L351.2 291.5 L359 284" fill="none" stroke="#c9a467" stroke-width="1.5"/>
<g fill="none" stroke="#e6f0fc" stroke-width="1.9" stroke-linecap="round" stroke-linejoin="round">
 <!-- house -->
 <path d="M44.5 367.5 L58.5 354 L72.8 367.5 M47.5 364.5 V377 Q47.5 379.8 50 379.8 H67.5 Q70 379.8 70 377 V364.5 M55 379.8 V370.5 H62 V379.8 M66 360 V355.5 H69 V363"/>
 <!-- book -->
 <path d="M48 441.5 V423 Q48 420.5 50.5 420.5 H67 Q69.5 420.5 69.5 423 V441.5 M48 441.5 Q48 445.5 51.5 445.5 H70 M48 441.5 Q48 438 51.5 438 H69.5 M53.5 421 V438 M57 427 H65.5 M57 432.5 H65.5"/>
 <!-- lektorzy -->
 <path d="M51.5 558 V555.5 Q51.5 553.3 53.7 553.3 H72.5 Q74.7 553.3 74.7 555.5 V571.5 Q74.7 573.8 72.5 573.8 H59.5"/>
 <path d="M59.5 573.8 V571 Q59.5 568.8 61.7 568.8 H69 Q71 568.8 71 571 V573.8"/>
 <circle cx="50.4" cy="564.5" r="4.3"/>
 <path d="M42.5 579.3 Q42.5 571.8 50.4 571.8 Q58.3 571.8 58.3 579.3 Z"/>
 <!-- door -->
 <path d="M44.5 645.3 H60 M48 645.3 V623.5 L59.8 619.5 V645.3 M60 622.3 H67.5 Q69.8 622.3 69.8 624.5 V643 Q69.8 645.3 72 645.3 H73.5"/>
 <!-- calendar -->
 <rect x="47.5" y="689.5" width="23.5" height="23" rx="3"/>
 <path d="M53.2 686 V691.5 M65.3 686 V691.5 M47.5 696.5 H71 M47.5 702 H71 M47.5 707.3 H71 M55.3 696.5 V712.5 M63.2 696.5 V712.5" stroke-width="2"/>
 <!-- firmy -->
 <path d="M55.3 778.3 H48 Q45.7 778.3 45.7 776 V760.5 Q45.7 758.3 48 758.3 H55.3"/>
 <rect x="57.3" y="752.8" width="14" height="25.5" rx="2.5"/>
 <rect x="48.9" y="763.3" width="3.3" height="3.3" stroke-width="1.6"/>
 <rect x="48.9" y="770" width="3.3" height="3.3" stroke-width="1.6"/>
 <rect x="62.6" y="757" width="3.3" height="3.3" stroke-width="1.6"/>
 <rect x="62.6" y="763.5" width="3.3" height="3.3" stroke-width="1.6"/>
 <rect x="62.6" y="770" width="3.3" height="3.3" stroke-width="1.6"/>
 <!-- mail -->
 <rect x="45.8" y="822.5" width="25.5" height="18.5" rx="3"/>
 <path d="M47 824.5 L58.5 833 L70 824.5"/>
 <!-- sms -->
 <path d="M45 886 H59 Q62 886 62 889 V899 Q62 902 59 902 H52 L48 906 V902 H45 Q42 902 42 899 V889 Q42 886 45 886 Z"/>
 <path d="M62.5 893 H72 Q75 893 75 896 V904.5 Q75 907.5 72 907.5 H70 V911.5 L66 907.5 H58 Q55 907.5 55 904.5 V902.5"/>
 <!-- doc -->
 <path d="M61 951.5 H52 Q49.3 951.5 49.3 954.2 V975.5 Q49.3 978.2 52 978.2 H65.8 Q68.5 978.2 68.5 975.5 V959 Z M61 951.5 V956.5 Q61 959 63.5 959 H68.5 M53.5 964.5 H64 M53.5 968.5 H64 M53.5 972.5 H64"/>
 <!-- user -->
 <circle cx="58.5" cy="1024.8" r="6.2"/>
 <path d="M47.3 1044.3 Q47.3 1033.3 58.5 1033.3 Q69.8 1033.3 69.8 1044.3 Z"/>
 <!-- clock -->
 <circle cx="58.8" cy="1097.8" r="12.9"/>
 <path d="M57.8 1090.5 V1098 L64.3 1101.6"/>
 <!-- gear -->
 <circle cx="58.7" cy="1163.8" r="4.6"/>
 <path d="M55.8 1151.3 H61.6 L62.5 1155 L65.6 1156.8 L69.3 1155.6 L72.2 1160.6 L69.4 1163.3 V1165.7 L72.2 1168.4 L69.3 1173.4 L65.6 1172.2 L62.5 1174 L61.6 1177.3 H55.8 L54.9 1174 L51.8 1172.2 L48.1 1173.4 L45.2 1168.4 L48 1165.7 V1163.3 L45.2 1160.6 L48.1 1155.6 L51.8 1156.8 L54.9 1155 Z"/>
 <!-- wallet -->
 <rect x="32.5" y="1245" width="30.5" height="22.3" rx="3.5"/>
 <path d="M38.5 1240.8 H61"/>
</g>
<circle cx="55.2" cy="1255.8" r="1.6" fill="#e6f0fc"/>
<circle cx="55.6" cy="632.3" r="1.3" fill="#e6f0fc"/>
<path d="M347.5 1245.8 L355.3 1253.5 L347.5 1261" fill="none" stroke="#d6e4f6" stroke-width="1.7"/>
<!-- people (active) -->
<g fill="none" stroke="#3b6db5" stroke-width="2" stroke-linecap="round" stroke-linejoin="round">
 <circle cx="58.5" cy="496.5" r="4.5"/>
 <path d="M49.6 511.5 Q49.6 503.8 58.5 503.8 Q67.4 503.8 67.4 511.5 Z"/>
 <circle cx="48.5" cy="489.3" r="3.2"/>
 <circle cx="69.3" cy="489.3" r="3.2"/>
 <path d="M42.5 500.5 Q42.5 495 48.5 495 Q51 495 52 496 M74.5 500.5 Q74.5 495 69 495 Q66.5 495 65.2 496"/>
</g>
</svg>

<!-- ===== middle panel icons ===== -->
<svg style="left:0;top:0" width="2560" height="1297" viewBox="0 0 2560 1297">
 <!-- plus on Dodaj kursanta -->
 <path d="M584.2 47.5 V56.5 M579.7 52 H588.7" stroke="#f4f8fd" stroke-width="2.2" stroke-linecap="round"/>
 <!-- search -->
 <circle cx="451" cy="233" r="5.8" fill="none" stroke="#6f7d8c" stroke-width="2.8"/>
 <path d="M455.3 237.5 L460 242.3" stroke="#6f7d8c" stroke-width="3.2" stroke-linecap="round"/>
 <!-- slash -->
 <path d="M790.3 225 L783.5 247.3" stroke="#222" stroke-width="2.6"/>
 <!-- sort arrow -->
 <path d="M824.5 310.5 V326 M818 319.5 L824.5 326 L831 319.5" fill="none" stroke="#444" stroke-width="2.2"/>
</svg>

<!-- popup (above text) -->
<div class="b" style="left:820px;top:53px;width:66px;height:148px;background:#fff;border:1px solid #eceef0;border-radius:6px;box-shadow:0 2px 8px rgba(0,0,0,0.08)"></div>
<div class="b" style="left:820px;top:102px;width:66px;height:1px;background:#e8e9eb"></div>
<div class="b" style="left:820px;top:152px;width:66px;height:1px;background:#e8e9eb"></div>
<svg style="left:0;top:0" width="2560" height="1297" viewBox="0 0 2560 1297">
 <g fill="none" stroke="#333" stroke-width="1.9">
  <path d="M847 70 L860 83 M860 70 L847 83"/>
  <path d="M853 117 V136 M845.5 124.5 L853 117 L860.5 124.5"/>
  <path d="M853 167 V186 M845.5 178.5 L853 186 L860.5 178.5"/>
 </g>
</svg>

<!-- ===== right panel icons ===== -->
<svg style="left:0;top:0" width="2560" height="1297" viewBox="0 0 2560 1297">
 <!-- gear Ustawienia -->
 <g transform="translate(2400.2 343.3)">
  <path d="M-2.2 -9.3 H2.2 L2.8 -6.6 L5.2 -5.3 L7.8 -6.3 L10 -2.5 L7.9 -0.6 V1.6 L10 3.5 L7.8 7.3 L5.2 6.3 L2.8 7.6 L2.2 9.3 H-2.2 L-2.8 7.6 L-5.2 6.3 L-7.8 7.3 L-10 3.5 L-7.9 1.6 V-0.6 L-10 -2.5 L-7.8 -6.3 L-5.2 -5.3 L-2.8 -6.6 Z" fill="#555"/>
  <circle cx="0" cy="0.5" r="3" fill="#fff"/>
 </g>
 <!-- calendar filled -->
 <rect x="975.5" y="374" width="16" height="16" rx="1.5" fill="#8e95a0"/>
 <path d="M979.5 371.8 V376 M987.5 371.8 V376" stroke="#8e95a0" stroke-width="2.2"/>
 <path d="M975.5 377.2 H991.5" stroke="#fff" stroke-width="0.8"/>
 <g fill="#fff">
  <rect x="977.5" y="379" width="3" height="3"/><rect x="982" y="379" width="3" height="3"/><rect x="986.5" y="379" width="3" height="3"/>
  <rect x="977.5" y="384" width="3" height="3"/><rect x="982" y="384" width="3" height="3"/><rect x="986.5" y="384" width="3" height="3"/>
 </g>
 <!-- money -->
 <rect x="1205.5" y="374" width="20.5" height="13.5" rx="1.5" fill="none" stroke="#8e95a0" stroke-width="1.5"/>
 <circle cx="1215.7" cy="380.7" r="3.4" fill="none" stroke="#8e95a0" stroke-width="1.4"/>
 <path d="M1215.7 378.8 V382.3" stroke="#8e95a0" stroke-width="1.2"/>
 <g fill="#8e95a0"><circle cx="1208" cy="376.5" r="0.9"/><circle cx="1223.5" cy="376.5" r="0.9"/><circle cx="1208" cy="385" r="0.9"/><circle cx="1223.5" cy="385" r="0.9"/></g>
 <!-- gears on Przelicz -->
 <g fill="#333">
  <g transform="translate(1691.8 428.3)">
   <path d="M-1.6 -6 H1.6 L2 -4.3 L3.6 -3.4 L5.2 -4.1 L6.8 -1.3 L5.4 -0.2 V1.2 L6.8 2.3 L5.2 5.1 L3.6 4.4 L2 5.3 L1.6 7 H-1.6 L-2 5.3 L-3.6 4.4 L-5.2 5.1 L-6.8 2.3 L-5.4 1.2 V-0.2 L-6.8 -1.3 L-5.2 -4.1 L-3.6 -3.4 L-2 -4.3 Z"/>
  </g>
  <g transform="translate(1703.5 436)">
   <path d="M-1.5 -6 H1.5 L1.9 -4.3 L3.5 -3.4 L5 -4.1 L6.5 -1.3 L5.2 -0.2 V1.2 L6.5 2.3 L5 5.1 L3.5 4.4 L1.9 5.3 L1.5 7 H-1.5 L-1.9 5.3 L-3.5 4.4 L-5 5.1 L-6.5 2.3 L-5.2 1.2 V-0.2 L-6.5 -1.3 L-5 -4.1 L-3.5 -3.4 L-1.9 -4.3 Z"/>
  </g>
 </g>
 <circle cx="1691.8" cy="428.8" r="2" fill="#fff"/>
 <circle cx="1703.5" cy="436.5" r="2" fill="#fff"/>
 <!-- plus Dodaj ratę -->
 <path d="M1001.8 1054.3 V1062.7 M997.6 1058.5 H1006" stroke="#f5faee" stroke-width="2" stroke-linecap="round"/>
 <!-- save icon -->
 <g fill="none" stroke="#f4f8fd" stroke-width="1.8" stroke-linejoin="round">
  <path d="M1186.5 1049.5 H1198 L1202.5 1054 V1065 Q1202.5 1067.5 1200 1067.5 H1186.5 Q1184 1067.5 1184 1065 V1052 Q1184 1049.5 1186.5 1049.5 Z"/>
  <path d="M1188.5 1049.5 V1054 H1196.5 V1049.5"/>
  <circle cx="1193.3" cy="1061" r="2.5"/>
 </g>
</svg>

</body></html>
